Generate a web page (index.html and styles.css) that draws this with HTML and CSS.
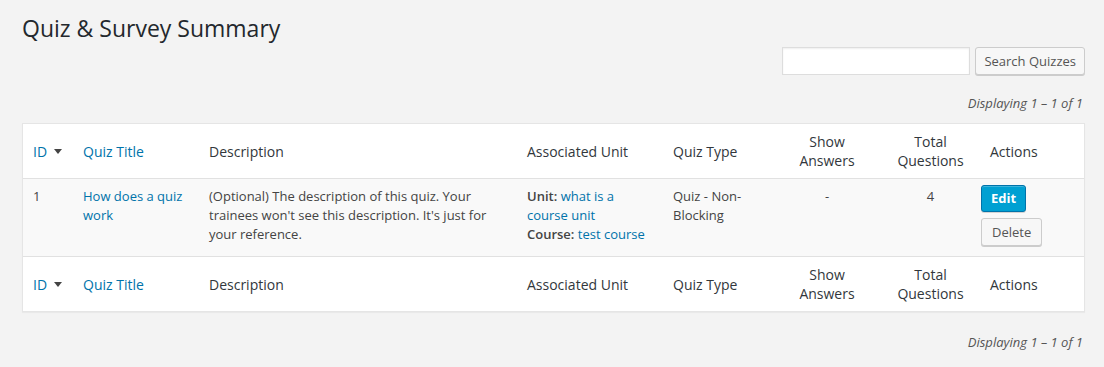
FILE: index.html
```html
<!DOCTYPE html>
<html>
<head>
  <title>Quiz &amp; Survey Summary</title>
  <link rel="stylesheet" href="styles.css">
</head>
<body>
  <div class="wrap">
    <h1>Quiz &amp; Survey Summary</h1>

    <form class="search-box">
      <input type="text" class="search-input">
      <button type="button" class="button search-button">Search Quizzes</button>
    </form>

    <div class="pagination">Displaying 1 &ndash; 1 of 1</div>

    <table class="quiz-table">
      <colgroup>
        <col style="width: 50px">
        <col style="width: 126px">
        <col style="width: 318px">
        <col style="width: 146px">
        <col style="width: 110px">
        <col style="width: 108px">
        <col style="width: 99px">
        <col>
      </colgroup>
      <thead>
        <tr>
          <th><a href="#" class="sort">ID <span class="arrow"></span></a></th>
          <th><a href="#">Quiz Title</a></th>
          <th>Description</th>
          <th>Associated Unit</th>
          <th>Quiz Type</th>
          <th class="center">Show Answers</th>
          <th class="center">Total Questions</th>
          <th>Actions</th>
        </tr>
      </thead>
      <tbody>
        <tr>
          <td>1</td>
          <td><a href="#">How does a quiz work</a></td>
          <td>(Optional) The description of this quiz. Your trainees won't see this description. It's just for your reference.</td>
          <td>
            <strong>Unit:</strong> <a href="#">what is a course unit</a><br>
            <strong>Course:</strong> <a href="#">test course</a>
          </td>
          <td>Quiz - Non-Blocking</td>
          <td class="center">-</td>
          <td class="center">4</td>
          <td class="actions">
            <a href="#" class="button button-primary">Edit</a>
            <a href="#" class="button">Delete</a>
          </td>
        </tr>
      </tbody>
      <tfoot>
        <tr>
          <th><a href="#" class="sort">ID <span class="arrow"></span></a></th>
          <th><a href="#">Quiz Title</a></th>
          <th>Description</th>
          <th>Associated Unit</th>
          <th>Quiz Type</th>
          <th class="center">Show Answers</th>
          <th class="center">Total Questions</th>
          <th>Actions</th>
        </tr>
      </tfoot>
    </table>

    <div class="pagination bottom">Displaying 1 &ndash; 1 of 1</div>
  </div>
</body>
</html>
```

FILE: styles.css
```css
body {
  margin: 0;
  background-color: #f3f3f3;
  font-family: "Open Sans", sans-serif;
  font-size: 13px;
  color: #444;
}

a {
  color: #0073aa;
  text-decoration: none;
}

.wrap {
  padding: 0 19px 0 22px;
}

h1 {
  margin: 14px 0 0;
  font-size: 23px;
  font-weight: 400;
  line-height: 29px;
  color: #23282d;
}

.search-box {
  display: flex;
  justify-content: flex-end;
  gap: 5px;
  margin-top: 4px;
}

.search-input {
  width: 188px;
  height: 28px;
  box-sizing: border-box;
  border: 1px solid #ddd;
  background: #fff;
  box-shadow: inset 0 1px 2px rgba(0, 0, 0, 0.07);
}

.button {
  display: inline-block;
  height: 28px;
  box-sizing: border-box;
  padding: 0 10px;
  border: 1px solid #ccc;
  border-radius: 3px;
  background: #f7f7f7;
  box-shadow: 0 1px 0 #ccc;
  font-family: "Open Sans", sans-serif;
  font-size: 13px;
  line-height: 26px;
  color: #555;
  cursor: pointer;
}

.search-button {
  padding: 0 8px;
}

.button-primary {
  height: 27px;
  line-height: 25px;
  background: #00a0d2;
  border-color: #0073aa;
  box-shadow: inset 0 1px 0 rgba(120, 200, 230, 0.5), 0 1px 0 rgba(0, 0, 0, 0.15);
  color: #fff;
  font-weight: 700;
}

.pagination {
  margin-top: 19px;
  text-align: right;
  font-style: italic;
  line-height: 19px;
  color: #555;
  padding-right: 2px;
}

.pagination.bottom {
  margin-top: 21px;
}

.quiz-table {
  width: 1063px;
  margin-top: 10px;
  table-layout: fixed;
  border-spacing: 0;
  background: #fff;
  border: 1px solid #e5e5e5;
  box-shadow: 0 1px 1px rgba(0, 0, 0, 0.04);
}

.quiz-table th {
  padding: 8px 10px;
  font-size: 14px;
  font-weight: 400;
  line-height: 19px;
  text-align: left;
  color: #32373c;
  vertical-align: middle;
}

.quiz-table thead th {
  border-bottom: 1px solid #e1e1e1;
}

.quiz-table tfoot th {
  border-top: 1px solid #e1e1e1;
}

.quiz-table td {
  padding: 8px 10px;
  line-height: 19px;
  vertical-align: top;
  background: #f9f9f9;
}

.quiz-table strong {
  font-weight: 600;
}

.quiz-table .center {
  text-align: center;
}

.sort {
  display: inline-flex;
  align-items: center;
  gap: 7px;
}

.arrow {
  width: 0;
  height: 0;
  border-left: 4px solid transparent;
  border-right: 4px solid transparent;
  border-top: 5px solid #444;
}

.quiz-table td.actions {
  padding: 6px 10px 10px 1px;
}

.actions .button {
  display: block;
  width: fit-content;
  margin-bottom: 6px;
}

.actions .button-primary {
  padding: 0 9px;
}

.actions .button:last-child {
  margin-bottom: 0;
}
```
